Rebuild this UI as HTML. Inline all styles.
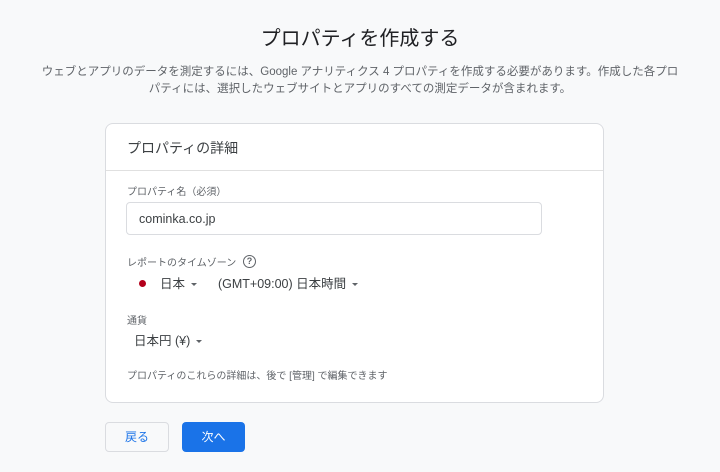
<!DOCTYPE html>
<html><head><meta charset="utf-8"><style>
*{margin:0;padding:0;box-sizing:border-box}
body{width:720px;height:472px;background:#f8f9fa;font-family:"Liberation Sans","Noto Sans CJK JP",sans-serif;color:#3c4043;position:relative;overflow:hidden}
.a{position:absolute;white-space:nowrap}
.card{position:absolute;left:105px;top:123px;width:499px;height:280px;background:#fff;border:1px solid #dadce0;border-radius:8px}
.hd{position:absolute;left:0;right:0;top:46px;border-top:1px solid #e0e0e0}
.lbl{font-size:10px;color:#5f6368}
.tri{display:inline-block;width:0;height:0;border-left:3px solid transparent;border-right:3px solid transparent;border-top:3px solid #5f6368;vertical-align:middle;margin-left:6px}
</style></head><body>
<div class="a" style="left:0;width:720px;text-align:center;top:22px;font-size:20px;color:#202124">プロパティを作成する</div>
<div class="a" style="left:0;width:720px;text-align:center;top:64px;font-size:11.5px;line-height:17px;color:#5f6368;white-space:normal">ウェブとアプリのデータを測定するには、Google アナリティクス 4 プロパティを作成する必要があります。作成した各プロ<br>パティには、選択したウェブサイトとアプリのすべての測定データが含まれます。</div>
<div class="card">
<div class="a" style="left:21px;top:14px;font-size:14px;color:#3c4043">プロパティの詳細</div>
<div class="hd"></div>
<div class="a lbl" style="left:21px;top:59px">プロパティ名（必須）</div>
<div class="a" style="left:20px;top:78px;width:416px;height:33px;border:1px solid #dadce0;border-radius:4px;font-size:12.5px;padding:9px 0 0 12px;color:#3c4043">cominka.co.jp</div>
<div class="a lbl" style="left:21px;top:130px">レポートのタイムゾーン</div>
<div class="a" style="left:137px;top:131px;width:13px;height:13px;border:1.4px solid #5f6368;border-radius:50%;font-size:9px;text-align:center;line-height:11px;color:#5f6368;font-weight:bold">?</div>
<div class="a" style="left:33px;top:156px;width:7px;height:7px;border-radius:50%;background:#b3001b"></div>
<div class="a" style="left:54px;top:149px;font-size:12.5px">日本<span class="tri"></span></div>
<div class="a" style="left:112px;top:149px;font-size:12.5px">(GMT+09:00) 日本時間<span class="tri"></span></div>
<div class="a lbl" style="left:21px;top:188px">通貨</div>
<div class="a" style="left:28px;top:206px;font-size:12.5px">日本円 (¥)<span class="tri"></span></div>
<div class="a lbl" style="left:21px;top:243px">プロパティのこれらの詳細は、後で [管理] で編集できます</div>
</div>
<div class="a" style="left:105px;top:422px;width:64px;height:30px;border:1px solid #dadce0;border-radius:4px;background:#f8f9fa;color:#1a73e8;font-size:12px;text-align:center;line-height:28px">戻る</div>
<div class="a" style="left:182px;top:422px;width:63px;height:30px;border-radius:4px;background:#1a73e8;color:#fff;font-size:12px;text-align:center;line-height:30px">次へ</div>
</body></html>
